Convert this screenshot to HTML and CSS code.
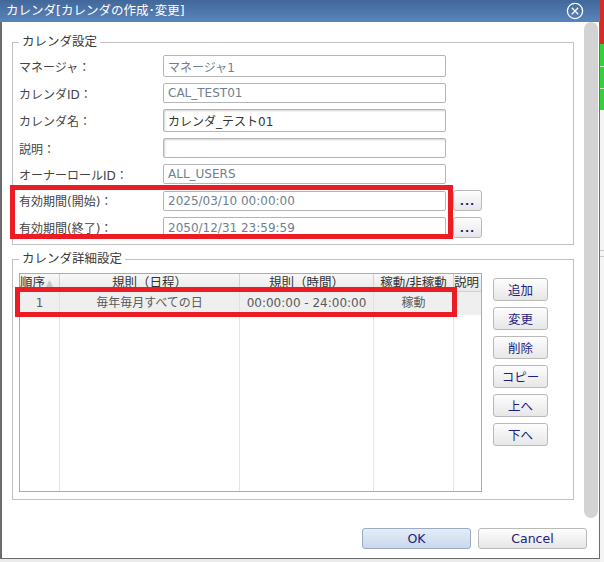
FILE: index.html
```html
<!doctype html>
<html lang="ja">

<head>
	<meta charset="UTF-8">
	<title>カレンダ[カレンダの作成･変更]</title>
	<link rel="stylesheet" href="styles.css">
</head>

<body>
	<div class="screen">
		<div class="dialog">
			<div class="titlebar">
				<span class="title">カレンダ[カレンダの作成･変更]</span>
				<svg class="close" width="18" height="18" viewBox="0 0 18 18">
					<circle cx="9" cy="9" r="7.6" fill="none" stroke="#fff" stroke-width="1.3" />
					<path d="M5.8 5.8 L12.2 12.2 M12.2 5.8 L5.8 12.2" stroke="#fff" stroke-width="1.3" />
				</svg>
			</div>
			<div class="dialog-body">
				<fieldset class="group settings">
					<legend>カレンダ設定</legend>
					<div class="form-row">
						<label>マネージャ：</label><input class="field readonly tall" readonly value="マネージャ1">
					</div>
					<div class="form-row">
						<label>カレンダID：</label><input class="field readonly" readonly value="CAL_TEST01">
					</div>
					<div class="form-row">
						<label>カレンダ名：</label><input class="field edit" value="カレンダ_テスト01">
					</div>
					<div class="form-row">
						<label>説明：</label><input class="field edit short" value="">
					</div>
					<div class="form-row">
						<label>オーナーロールID：</label><input class="field readonly" readonly value="ALL_USERS">
					</div>
					<div class="form-row">
						<label>有効期間(開始)：</label><input class="field readonly" readonly value="2025/03/10 00:00:00"><button class="btn dots">...</button>
					</div>
					<div class="form-row last">
						<label>有効期間(終了)：</label><input class="field readonly wide" readonly value="2050/12/31 23:59:59"><button class="btn dots">...</button>
					</div>
				</fieldset>

				<fieldset class="group detail">
					<legend>カレンダ詳細設定</legend>
					<div class="detail-inner">
						<div class="grid">
							<div class="grid-row head">
								<div class="cell left">順序<span class="sort">▲</span></div>
								<div class="cell">規則（日程）</div>
								<div class="cell">規則（時間）</div>
								<div class="cell">稼動/非稼動</div>
								<div class="cell left">説明</div>
							</div>
							<div class="grid-row data">
								<div class="cell">1</div>
								<div class="cell">毎年毎月すべての日</div>
								<div class="cell">00:00:00 - 24:00:00</div>
								<div class="cell">稼動</div>
								<div class="cell"></div>
							</div>
							<div class="grid-row filler">
								<div class="cell"></div>
								<div class="cell"></div>
								<div class="cell"></div>
								<div class="cell"></div>
								<div class="cell"></div>
							</div>
						</div>
						<div class="side-buttons">
							<button class="btn side">追加</button>
							<button class="btn side">変更</button>
							<button class="btn side">削除</button>
							<button class="btn side">コピー</button>
							<button class="btn side">上へ</button>
							<button class="btn side">下へ</button>
						</div>
					</div>
				</fieldset>

				<div class="footer">
					<button class="btn action ok">OK</button>
					<button class="btn action">Cancel</button>
				</div>
			</div>

			<div class="thumb"></div>
			<div class="mark mark-period"></div>
			<div class="mark mark-row"></div>
		</div>
		<div class="backdrop"></div>
	</div>
</body>

</html>
```

FILE: styles.css
```css
body {
	margin: 0;
	background-color: #ebebeb;
	font-family: "DejaVu Sans", "Noto Sans CJK JP", sans-serif;
	font-size: 12px;
	color: #333;
}

.screen {
	display: flex;
	width: 604px;
	height: 562px;
	overflow: hidden;
}

.dialog {
	position: relative;
	box-sizing: border-box;
	width: 600px;
	height: 559px;
	background-color: white;
	border: 1px solid #6b6b6b;
	border-left-width: 2px;
	border-top: 0;
	display: flex;
	flex-direction: column;
}

.backdrop {
	width: 4px;
	height: 562px;
	background:
		linear-gradient(#d92a2a 0 44px, #34d23a 44px 66px, #c9e9c9 66px 67px, #34d23a 67px 88px, #c9e9c9 88px 89px, #34d23a 89px 110px, #f4f4f4 110px 250px, #c8c8c8 250px 251px, #f4f4f4 251px 256px, #c8c8c8 256px 257px, #f4f4f4 257px);
}

/* title bar */
.titlebar {
	height: 22px;
	margin-left: -2px;
	margin-right: -1px;
	padding-left: 6px;
	display: flex;
	align-items: center;
	justify-content: space-between;
	background: linear-gradient(#42679a, #5985bc);
	color: white;
}

.title {
	font-size: 12.5px;
	line-height: 22px;
}

.close {
	margin-right: 16px;
}

.dialog-body {
	padding: 11px 12px 0 10px;
	display: flex;
	flex-direction: column;
}

/* fieldsets */
fieldset.group {
	box-sizing: border-box;
	width: 562px;
	margin: 0;
	border: 1px solid #c2c2c2;
	padding: 4px 6px 6px 6px;
}

fieldset.group legend {
	margin-left: 0;
	padding: 0 3px;
	line-height: 18px;
	font-size: 12.5px;
	color: #3a3a3a;
}

.form-row {
	display: flex;
	align-items: center;
	margin-bottom: 6px;
}

.form-row.last {
	margin-bottom: 0;
}

.form-row label {
	width: 144px;
	color: #444;
}

input.field {
	box-sizing: border-box;
	width: 283px;
	height: 20px;
	margin: 0;
	padding: 0 4px;
	border: 1px solid #b5b5b5;
	border-radius: 2px;
	font-family: inherit;
	font-size: 12px;
	background-color: white;
	outline: none;
}

input.readonly {
	color: #6f7f8f;
}

input.tall {
	height: 22px;
}

input.wide {
	height: 21px;
}

input.edit {
	height: 23px;
	color: #333;
	box-shadow: inset 1px 1px 2px rgba(0, 0, 0, 0.18);
}

input.edit.short {
	height: 20px;
}

/* buttons */
.btn {
	box-sizing: border-box;
	margin: 0;
	padding: 0;
	border: 1px solid #b9b9b9;
	border-radius: 3px;
	background: linear-gradient(#fdfdfd, #e7e7e7);
	font-family: inherit;
	font-size: 12.5px;
	color: #1d1d86;
}

.btn.dots {
	width: 29px;
	height: 21px;
	margin-left: 7px;
	font-size: 11px;
	font-weight: bold;
	line-height: 14px;
	letter-spacing: 1px;
	padding-top: 3px;
}

.btn.side {
	width: 55px;
	height: 23px;
}

.btn.action {
	width: 109px;
	height: 21px;
	line-height: 18px;
	color: #1f2080;
}

.btn.ok {
	background: linear-gradient(#e4edf8, #c9d8ec);
	border-color: #9aabc2;
}

/* detail grid */
fieldset.detail {
	margin-top: 5px;
	padding-top: 5px;
	padding-bottom: 7px;
}

.detail-inner {
	display: flex;
	align-items: flex-start;
}

.grid {
	box-sizing: border-box;
	width: 463px;
	height: 219px;
	border: 1px solid #ababab;
	display: flex;
	flex-direction: column;
	overflow: hidden;
}

.grid-row {
	display: grid;
	grid-template-columns: 40px 180px 134px 80px 1fr;
}

.grid-row .cell {
	box-sizing: border-box;
	border-right: 1px solid #dedede;
	text-align: center;
	white-space: nowrap;
	overflow: hidden;
}

.grid-row .cell:last-child {
	border-right: 0;
}

.grid-row.head {
	height: 17px;
	line-height: 17px;
	background: linear-gradient(#f8f8f8, #e8e8e8);
	border-bottom: 1px solid #d2d2d2;
	color: #333;
	font-size: 12.5px;
}

.grid-row.head .cell {
	border-right-color: #d2d2d2;
}

.grid-row.head .cell.left {
	text-align: left;
	padding-left: 0;
}

.sort {
	font-size: 9px;
	color: #c6c6c6;
	vertical-align: 1px;
	margin-left: 1px;
}

.grid-row.data {
	height: 23px;
	line-height: 23px;
	background-color: #efefef;
	color: #5a5a5a;
}

.grid-row.data .cell {
	border-right-color: #e2e2e2;
}

.grid-row.filler {
	flex: 1;
}

.grid-row.filler .cell {
	border-right-color: #e4e4e4;
}

.side-buttons {
	margin-left: 11px;
	padding-top: 5px;
	display: flex;
	flex-direction: column;
	gap: 6px;
}

/* footer */
.footer {
	margin-top: 28px;
	display: flex;
	justify-content: flex-end;
	gap: 7px;
}

/* overlay scrollbar */
.thumb {
	position: absolute;
	left: 582px;
	top: 22px;
	width: 14px;
	height: 496px;
	border-radius: 7px;
	background-color: #d3d3d3;
}

/* red annotation boxes */
.mark {
	position: absolute;
	box-sizing: border-box;
	border: 5px solid #ec1c24;
}

.mark-period {
	left: 8px;
	top: 185px;
	width: 443px;
	height: 54px;
}

.mark-row {
	left: 13px;
	top: 287px;
	width: 442px;
	height: 30px;
}
```
